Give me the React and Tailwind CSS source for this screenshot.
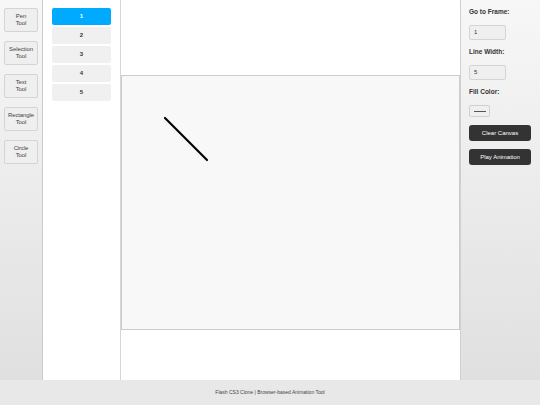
const tools = [
  ["Pen", "Tool"],
  ["Selection", "Tool"],
  ["Text", "Tool"],
  ["Rectangle", "Tool"],
  ["Circle", "Tool"],
];

const frames = [1, 2, 3, 4, 5];

function Toolbar() {
  return (
    <div className="flex w-[43px] shrink-0 flex-col items-center gap-[9px] border-r border-[#cccccc] bg-gradient-to-b from-[#f7f7f7] to-[#e0e0e0] pt-[8px]">
      {tools.map(([a, b]) => (
        <button
          key={a}
          className="flex h-[24px] w-[34px] flex-col items-center justify-center rounded-[2px] border border-[#d4d4d4] bg-[#efefef] text-[6px] leading-[7.5px] tracking-[-0.1px] text-[#444]"
        >
          <span>{a}</span>
          <span>{b}</span>
        </button>
      ))}
    </div>
  );
}

function Timeline() {
  return (
    <div className="flex w-[78px] shrink-0 flex-col items-center gap-[2px] border-r border-[#d6d6d6] bg-white pt-[8px] shadow-[1px_0_2px_rgba(0,0,0,0.06)]">
      {frames.map((n) => (
        <div
          key={n}
          className={
            n === 1
              ? "flex h-[17px] w-[59px] items-center justify-center rounded-[2px] bg-[#00aaff] text-[6px] font-bold text-white"
              : "flex h-[17px] w-[59px] items-center justify-center rounded-[2px] bg-[#f0f0f0] text-[6px] font-bold text-[#333]"
          }
        >
          {n}
        </div>
      ))}
    </div>
  );
}

function Stage() {
  return (
    <div className="flex flex-1 flex-col bg-white pt-[75px]">
      <div className="relative h-[255px] w-[339px] border border-[#cccccc] bg-[#f8f8f8]">
        <svg className="absolute left-0 top-0" width="339" height="255">
          <line x1="43" y1="42" x2="85" y2="84" stroke="#000" strokeWidth="2.2" strokeLinecap="round" />
        </svg>
      </div>
    </div>
  );
}

function Panel() {
  return (
    <div className="flex w-[80px] shrink-0 flex-col border-l border-[#d0d0d0] bg-gradient-to-b from-[#f7f7f7] to-[#e0e0e0] pl-[8px] pt-[7px] text-[#333]">
      <div className="h-[9px] text-[6.5px] font-bold leading-[9px]">Go to Frame:</div>
      <div className="mt-[9px] flex h-[15px] w-[37px] items-center rounded-[2px] border border-[#d4d4d4] bg-[#efefef] pl-[4px] text-[6px]">1</div>
      <div className="mt-[7px] h-[9px] text-[6.5px] font-bold leading-[9px]">Line Width:</div>
      <div className="mt-[9px] flex h-[15px] w-[37px] items-center rounded-[2px] border border-[#d4d4d4] bg-[#efefef] pl-[4px] text-[6px]">5</div>
      <div className="mt-[7px] h-[9px] text-[6.5px] font-bold leading-[9px]">Fill Color:</div>
      <div className="mt-[9px] flex h-[12px] w-[21px] items-center justify-center rounded-[2px] border border-[#d0d0d0] bg-[#efefef]">
        <div className="h-px w-[12px] bg-[#555]" />
      </div>
      <button className="mt-[8px] h-[16px] w-[62px] rounded-[3px] bg-[#333333] text-[6px] text-white">Clear Canvas</button>
      <button className="mt-[8px] h-[16px] w-[62px] rounded-[3px] bg-[#333333] text-[6px] text-white">Play Animation</button>
    </div>
  );
}

export default function App() {
  return (
    <div className="flex h-[405px] w-[540px] flex-col overflow-hidden font-['Liberation_Sans',Arial,sans-serif]">
      <div className="flex h-[380px]">
        <Toolbar />
        <Timeline />
        <Stage />
        <Panel />
      </div>
      <footer className="flex h-[25px] items-center justify-center bg-[#e8e8e8] text-[5px] text-[#444]">
        Flash CS3 Clone | Browser-based Animation Tool
      </footer>
    </div>
  );
}
